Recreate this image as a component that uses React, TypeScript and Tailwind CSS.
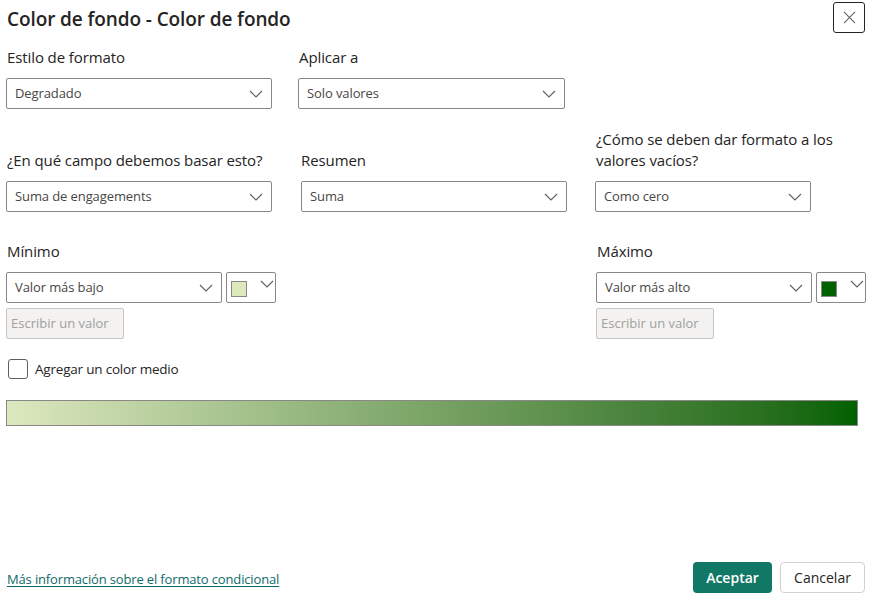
import React from 'react';

const font = { fontFamily: '"Open Sans", "Noto Sans", sans-serif' };

const Chevron = ({ className = '' }: { className?: string }) => (
  <svg viewBox="0 0 14 8" className={`h-[8px] w-[14px] ${className}`} fill="none">
    <path d="M1 1 L7 7 L13 1" stroke="#605e5c" strokeWidth="1.1" />
  </svg>
);

type DropdownProps = {
  value: string;
  width: string;
};

const Dropdown = ({ value, width }: DropdownProps) => (
  <div
    className={`${width} h-[31px] flex items-center justify-between border border-[#8a8886] rounded-[2px] pl-[8px] pr-[8px] bg-white`}
  >
    <span className="text-[13px] text-[#484644] tracking-[-0.1px]">{value}</span>
    <Chevron />
  </div>
);

const SwatchButton = ({ color }: { color: string }) => (
  <div className="w-[50px] h-[31px] ml-[4px] border border-[#8a8886] rounded-[2px] flex items-start pt-[8px] pl-[4px] gap-[13px]">
    <div className="w-[16px] h-[16px] border border-[#8a8886]" style={{ backgroundColor: color }} />
    <Chevron className="mt-[-1px]" />
  </div>
);

const Disabled = () => (
  <div className="w-[118px] h-[31px] mt-[5px] bg-[#f3f2f1] border border-[#c8c6c4] rounded-[2px] flex items-center pl-[4px] text-[13px] text-[#a19f9d]">
    Escribir un valor
  </div>
);

const Label = ({ children, className = '' }: { children: React.ReactNode; className?: string }) => (
  <div className={`text-[15px] leading-[21px] text-[#252423] tracking-[-0.1px] ${className}`}>{children}</div>
);

export default function App() {
  return (
    <div className="w-[885px] h-[602px] bg-white flex flex-col pl-[6px] pr-[20px] overflow-hidden" style={font}>
      <div className="flex items-start justify-between h-[47px]">
        <h1 className="mt-[5px] ml-[1px] text-[19px] font-semibold text-[#252423] tracking-[-0.1px]">
          Color de fondo - Color de fondo
        </h1>
        <button className="mt-[2px] w-[32px] h-[31px] border border-[#252423] rounded-[3px] flex items-center justify-center">
          <svg viewBox="0 0 14 14" className="w-[13px] h-[13px]" fill="none">
            <path d="M1 1 L13 13 M13 1 L1 13" stroke="#605e5c" strokeWidth="1.1" />
          </svg>
        </button>
      </div>

      <div className="flex">
        <div className="w-[292px]">
          <Label className="ml-[1px]">Estilo de formato</Label>
          <div className="mt-[10px]">
            <Dropdown value="Degradado" width="w-[266px]" />
          </div>
        </div>
        <div>
          <Label className="ml-[1px]">Aplicar a</Label>
          <div className="mt-[10px]">
            <Dropdown value="Solo valores" width="w-[267px]" />
          </div>
        </div>
      </div>

      <div className="flex mt-[20px]">
        <div className="w-[295px] flex flex-col justify-end">
          <Label className="ml-[1px]">¿En qué campo debemos basar esto?</Label>
          <div className="mt-[10px]">
            <Dropdown value="Suma de engagements" width="w-[266px]" />
          </div>
        </div>
        <div className="w-[294px] flex flex-col justify-end">
          <Label>Resumen</Label>
          <div className="mt-[10px]">
            <Dropdown value="Suma" width="w-[266px]" />
          </div>
        </div>
        <div className="flex flex-col justify-end">
          <Label className="ml-[1px]">
            ¿Cómo se deben dar formato a los
            <br />
            valores vacíos?
          </Label>
          <div className="mt-[10px]">
            <Dropdown value="Como cero" width="w-[216px]" />
          </div>
        </div>
      </div>

      <div className="flex justify-between mt-[29px]">
        <div>
          <Label className="ml-[1px]">Mínimo</Label>
          <div className="flex mt-[10px]">
            <Dropdown value="Valor más bajo" width="w-[216px]" />
            <SwatchButton color="#dde8bd" />
          </div>
          <Disabled />
        </div>
        <div className="mr-[-1px]">
          <Label className="ml-[1px]">Máximo</Label>
          <div className="flex mt-[10px]">
            <Dropdown value="Valor más alto" width="w-[216px]" />
            <SwatchButton color="#006100" />
          </div>
          <Disabled />
        </div>
      </div>

      <label className="flex items-center mt-[20px] ml-[2px]">
        <span className="w-[20px] h-[20px] border border-[#605e5c] rounded-[3px] bg-white" />
        <span className="ml-[7px] text-[13.5px] text-[#252423] tracking-[-0.2px]">Agregar un color medio</span>
      </label>

      <div className="mt-[21px] w-[852px] h-[26px] border border-[#8a8886] bg-gradient-to-r from-[#dde8bf] to-[#006100]" />

      <div className="flex-1" />

      <div className="flex items-center justify-between mb-[9px]">
        <a className="ml-[1px] mt-[4px] text-[13px] text-[#0f6b6b] underline underline-offset-[2px] tracking-[-0.15px]" href="#">
          Más información sobre el formato condicional
        </a>
        <div className="flex gap-[8px]">
          <button className="w-[79px] h-[31px] bg-[#117865] rounded-[4px] text-white text-[14px] font-semibold">
            Aceptar
          </button>
          <button className="w-[85px] h-[31px] bg-white border border-[#d1d1d1] rounded-[4px] text-[#252423] text-[14px]">
            Cancelar
          </button>
        </div>
      </div>
    </div>
  );
}
